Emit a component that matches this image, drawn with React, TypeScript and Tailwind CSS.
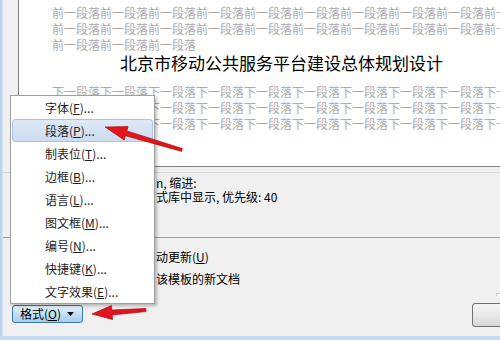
import React from "react";

const menuItems: { label: string; key: string; active?: boolean }[] = [
  { label: "字体", key: "F" },
  { label: "段落", key: "P", active: true },
  { label: "制表位", key: "T" },
  { label: "边框", key: "B" },
  { label: "语言", key: "L" },
  { label: "图文框", key: "M" },
  { label: "编号", key: "N" },
  { label: "快捷键", key: "K" },
  { label: "文字效果", key: "E" },
];

function FormatMenu() {
  return (
    <div className="absolute left-[10px] top-[95px] w-[145px] border border-[#a0a0a0] bg-white shadow-[2px_2px_3px_rgba(0,0,0,0.25)]">
      {menuItems.map((item) =>
        item.active ? (
          <div
            key={item.key}
            className="mx-[1px] flex h-[23px] items-center rounded-[3px] border border-[#a9c3e6] bg-gradient-to-b from-[#dfe9f6] to-[#ccdcf1] pl-[32px]"
          >
            {item.label}(<span className="underline">{item.key}</span>)...
          </div>
        ) : (
          <div key={item.key} className="flex h-[23px] items-center pl-[34px]">
            {item.label}(<span className="underline">{item.key}</span>)...
          </div>
        )
      )}
    </div>
  );
}

function Arrows() {
  return (
    <svg className="pointer-events-none absolute left-0 top-0" width="500" height="340" viewBox="0 0 500 340">
      <polygon
        points="105,127 128.1,126.6 126.8,130.9 182.4,148.6 181.6,151.4 125.4,135.7 124.1,140"
        fill="#e3141c"
        stroke="#a80f16"
        strokeWidth="0.7"
        strokeLinejoin="round"
      />
      <polygon
        points="92,314 111.5,305.5 111.8,310 145.9,308.5 146.1,311.5 112.2,315 112.5,319.5"
        fill="#e3141c"
        stroke="#a80f16"
        strokeWidth="0.7"
        strokeLinejoin="round"
      />
    </svg>
  );
}

export default function App() {
  const before = "前一段落".repeat(12);
  const after = "下一段落".repeat(12);

  return (
    <div className="relative flex h-[340px] w-[500px] flex-col overflow-hidden bg-[#f0f0f0] font-['Noto_Sans_CJK_SC',sans-serif] text-[12px] text-[#1e1e1e]">
      <div className="flex min-h-0 flex-1">
        <div className="w-[3px] bg-gradient-to-r from-[#b4cde9] to-[#d6e4f4]" />
        <div className="flex min-w-0 flex-1 flex-col">
          {/* preview */}
          <div className="ml-[15px] h-[167px] w-[600px] shrink-0 overflow-hidden whitespace-nowrap border-b border-l border-[#7f7f7f] bg-white pl-[33px] pt-[5px] text-[#ababab]">
            <div className="leading-[16px]">{before}</div>
            <div className="leading-[16px]">{before}</div>
            <div className="leading-[16px]">{"前一段落".repeat(3)}</div>
            <div className="ml-[68px] text-[17px] leading-[20px] text-black">北京市移动公共服务平台建设总体规划设计</div>
            <div className="mt-[11px] leading-[16px]">{after}</div>
            <div className="leading-[16px]">{after}</div>
            <div className="leading-[16px]">{after}</div>
          </div>

          {/* description */}
          <div className="mt-[5px] h-[65px] shrink-0 border-t border-[#d6d6d6] pl-[153px] pt-[3px] leading-[14px] text-black">
            <div>n, 缩进:</div>
            <div>式库中显示, 优先级: 40</div>
          </div>

          {/* options */}
          <div className="flex h-[59px] shrink-0 flex-col border-t border-[#a0a0a0] pt-[11px] leading-[16px] text-black">
            <div className="pl-[153px]">
              动更新(<span className="underline">U</span>)
            </div>
            <div className="mt-[6px] pl-[153px]">该模板的新文档</div>
            <div className="-mr-[8px] ml-auto mt-[6px] h-[11px] w-[12px] border-l border-t border-[#c8c8c8] bg-white" />
          </div>

          {/* buttons */}
          <div className="flex h-[40px] shrink-0 items-start">
            <button className="ml-[9px] mt-[9px] flex h-[18px] w-[71px] items-center rounded-[3px] border border-[#3c7aad] bg-gradient-to-b from-[#e4f2fc] to-[#a3cdee] pl-[7px] text-[12px] leading-none text-black">
              格式(<span className="underline">O</span>)
              <svg className="ml-[6px]" width="7" height="4" viewBox="0 0 7 4">
                <polygon points="0,0 7,0 3.5,4" fill="#111" />
              </svg>
            </button>
            <div className="-mr-[12px] ml-auto mt-[7px] h-[24px] w-[40px] rounded-[3px] border border-[#707070] bg-gradient-to-b from-[#f3f3f3] via-[#ebebeb] to-[#d6d6d6]" />
          </div>
        </div>
      </div>
      <div className="h-[4px] bg-[#c8daef]" />

      <FormatMenu />
      <Arrows />
    </div>
  );
}
